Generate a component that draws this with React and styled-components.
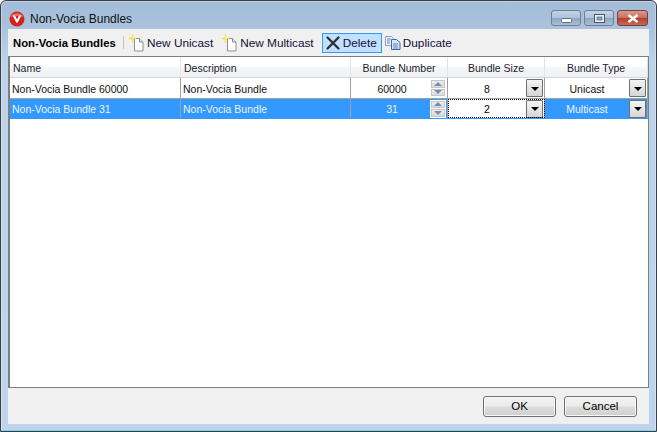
import styled, { createGlobalStyle } from "styled-components";

const Global = createGlobalStyle`
  html, body { margin: 0; padding: 0; background: #fff; }
  body { font-family: "Liberation Sans", Arial, sans-serif; font-size: 10.5px; color: #000; }
`;

const Window = styled.div`
  width: 657px;
  height: 432px;
  box-sizing: border-box;
  display: flex;
  flex-direction: column;
  border: 1px solid #3a3f46;
  border-radius: 6px 6px 0 0;
  background: linear-gradient(180deg, #a3bcd8 0, #abc3dd 30px, #bcd3ea 60px, #bdd4ec 100%);
  box-shadow: inset 0 0 0 1px rgba(255, 255, 255, 0.35);
`;

const TitleBar = styled.div`
  height: 28px;
  flex: none;
  display: flex;
  align-items: flex-start;
  justify-content: space-between;
  padding: 0 8px 0 8px;
`;

const TitleLeft = styled.div`
  display: flex;
  align-items: center;
  gap: 5px;
  height: 36px;
  font-size: 12px;
  color: #111;
`;

const Controls = styled.div`
  display: flex;
  gap: 3px;
  margin-top: 9px;
`;

const Control = styled.div`
  width: ${(p) => (p.$close ? 31 : 30)}px;
  height: 16px;
  box-sizing: border-box;
  display: flex;
  align-items: ${(p) => (p.$low ? "flex-end" : "center")};
  justify-content: center;
  padding-bottom: ${(p) => (p.$low ? 2 : 0)}px;
  border: 1px solid ${(p) => (p.$close ? "#7c3f38" : "#6d7f95")};
  border-radius: 3px;
  background: ${(p) =>
    p.$close
      ? "linear-gradient(180deg, #d79a8e 0, #c9705f 48%, #b2402c 52%, #c56a58 100%)"
      : "linear-gradient(180deg, #c3d3e5 0, #aec2d9 48%, #8ea6c1 52%, #a9bfd7 100%)"};
`;

const Content = styled.div`
  flex: 1;
  margin: 0 7px;
  display: flex;
  flex-direction: column;
  background: #f0f0f0;
  min-height: 0;
`;

const Toolbar = styled.div`
  height: 27px;
  flex: none;
  display: flex;
  align-items: center;
  padding-left: 5px;
  font-size: 11.8px;
`;

const ToolTitle = styled.span`
  font-weight: 700;
  font-size: 11.3px;
  width: 103px;
  white-space: nowrap;
`;

const Separator = styled.div`
  width: 1px;
  height: 13px;
  background: #c4c4c4;
  margin: 0 4px 0 7px;
`;

const ToolButton = styled.div`
  height: 20px;
  box-sizing: border-box;
  display: flex;
  align-items: center;
  gap: 2px;
  padding: 0 ${(p) => (p.$active ? 4 : 2)}px 0 ${(p) => (p.$active ? 2 : 0)}px;
  margin-right: ${(p) => (p.$active ? 2 : 5)}px;
  border: 1px solid ${(p) => (p.$active ? "#3399ff" : "transparent")};
  background: ${(p) => (p.$active ? "#c2e0ff" : "transparent")};
  color: #10103a;
`;

const Grid = styled.div`
  flex: 1;
  min-height: 0;
  background: #fff;
  border: 1px solid #7f7f7f;
  border-left-width: 2px;
  box-sizing: border-box;
`;

const Columns = "171px 170px 97px 97px 1fr";

const HeadRow = styled.div`
  height: 21px;
  display: grid;
  grid-template-columns: ${Columns};
  background: linear-gradient(180deg, #fff 0, #fff 45%, #f4f5f6 55%, #eff1f2 100%);
  border-bottom: 1px solid #d5d5d5;
  box-sizing: border-box;
`;

const HeadCell = styled.div`
  display: flex;
  align-items: center;
  justify-content: ${(p) => (p.$center ? "center" : "flex-start")};
  padding-left: ${(p) => (p.$center ? 0 : 3)}px;
  padding-top: 2px;
  border-right: 1px solid #e3e4e6;
  color: #1b1b2e;
`;

const Row = styled.div`
  height: ${(p) => (p.$selected ? 19 : 20)}px;
  display: grid;
  grid-template-columns: ${Columns};
  background: ${(p) => (p.$selected ? "#3399ff" : "#fff")};
  color: ${(p) => (p.$selected ? "#eaf4ff" : "#111")};
  border-bottom: 1px solid ${(p) => (p.$selected ? "#3399ff" : "#a0a0a0")};
`;

const Cell = styled.div`
  display: flex;
  align-items: center;
  min-width: 0;
  padding-left: ${(p) => (p.$number ? 3 : p.$center ? 0 : 2)}px;
  border-right: 1px solid #a0a0a0;
`;

const CellText = styled.span`
  flex: 1;
  padding-top: 1px;
  text-align: ${(p) => (p.$center ? "center" : "left")};
  white-space: nowrap;
`;

const EditCell = styled(Cell)`
  background: #fff;
  color: #000;
  outline: 1px dotted #000;
  outline-offset: -1px;
  padding-left: 0;
`;

const Spinner = styled.div`
  width: 14px;
  height: 16px;
  margin-right: 1px;
  flex: none;
  display: flex;
  flex-direction: column;
  gap: 1px;
  background: ${(p) => (p.$selected ? "#fff" : "transparent")};
  padding: 1px;
`;

const SpinPart = styled.div`
  flex: 1;
  display: flex;
  align-items: center;
  justify-content: center;
  background: linear-gradient(180deg, #eeeef0, #d9dade);
  border: 1px solid #c6c7cb;
`;

const ArrowUp = styled.div`
  border-left: 4px solid transparent;
  border-right: 4px solid transparent;
  border-bottom: 4px solid #7a8cb4;
`;

const ArrowDown = styled(ArrowUp)`
  border-bottom: 0;
  border-top: 4px solid #7a8cb4;
`;

const DropButton = styled.div`
  width: 17px;
  height: 18px;
  margin-right: 1px;
  flex: none;
  box-sizing: border-box;
  display: flex;
  align-items: center;
  justify-content: center;
  border: 1px solid #707070;
  border-radius: 1px;
  background: linear-gradient(180deg, #f4f4f4, #d6d6d6);
`;

const DropArrow = styled.div`
  border-left: 4px solid transparent;
  border-right: 4px solid transparent;
  border-top: 4px solid #000;
  margin-top: 1px;
`;

const Footer = styled.div`
  height: 36px;
  flex: none;
  display: flex;
  justify-content: flex-end;
  align-items: center;
  gap: 8px;
  padding-right: 12px;
  box-sizing: border-box;
`;

const Button = styled.div`
  width: 73px;
  height: 21px;
  box-sizing: border-box;
  display: flex;
  align-items: center;
  justify-content: center;
  border: 1px solid #707070;
  border-radius: 3px;
  background: linear-gradient(180deg, #f2f2f2 0, #ebebeb 48%, #dddddd 52%, #cfcfcf 100%);
  box-shadow: inset 0 0 0 1px #f8f8f8;
  font-size: 11.5px;
`;

const BottomEdge = styled.div`
  height: 7px;
  flex: none;
  border-bottom: 1px solid #7fd0e0;
  box-sizing: border-box;
`;

const AppIcon = () => (
  <svg width="16" height="16" viewBox="0 0 16 16">
    <circle cx="8" cy="8" r="7.5" fill="#d3221e" />
    <path d="M1.5 6a7 6 0 0 1 13 0c-3-1.5-10-1.5-13 0z" fill="#ee6a60" />
    <path d="M3.6 4.5 6 4.5 8 8.4 10 4.5 12.4 4.5 8.6 11.8 7.4 11.8z" fill="#fff" />
  </svg>
);

const NewIcon = () => (
  <svg width="16" height="18" viewBox="0 0 16 18">
    <path d="M5.5 4.5h5l3.5 3.5v9h-8.500z" fill="#fff" stroke="#8b8f94" />
    <path d="M10.500 4.500v3.500h3.500" fill="#dfe6ee" stroke="#8b8f94" />
    <path d="M3.500 0.500v2M3.500 6.500v2M0 4.500h2M5 4.500h2" stroke="#f2d84a" strokeWidth="1.400" />
    <rect x="2" y="3" width="3" height="3" fill="#f7e56c" />
  </svg>
);

const DeleteIcon = () => (
  <svg width="16" height="16" viewBox="0 0 16 16">
    <path d="M2.500 2.500 13.500 13.500M13.500 2.500 2.500 13.500" stroke="#2c3036" strokeWidth="2.300" strokeLinecap="round" />
  </svg>
);

const DuplicateIcon = () => (
  <svg width="16" height="14" viewBox="0 0 16 14">
    <path d="M0.500 0.500h6l2 2v7h-8z" fill="#f4f7fb" stroke="#8a9db8" />
    <path d="M6.500 3.500h5l3.500 3v7h-8.500z" fill="#d8e6f7" stroke="#3d67a8" />
    <path d="M2 3h4M2 5h3M2 7h3M8 8h5M8 10h5M8 12h5" stroke="#5f83bb" />
  </svg>
);

const Minimize = () => (
  <svg width="11" height="5" viewBox="0 0 11 5"><rect x="0.500" y="0.500" width="10" height="4" rx="1" fill="#fff" stroke="#5c6c80" /></svg>
);
const Maximize = () => (
  <svg width="11" height="9" viewBox="0 0 11 9"><rect x="0.500" y="0.500" width="10" height="8" fill="#e9eff6" stroke="#46566a" /><rect x="3" y="3" width="5" height="3" fill="#8ea6c1" stroke="#46566a" strokeWidth="0.600" /></svg>
);
const Close = () => (
  <svg width="12" height="9" viewBox="0 0 12 9"><path d="M1.500 1 10.500 8M10.500 1 1.500 8" stroke="#fff" strokeWidth="2.400" /></svg>
);

const Spin = ({ selected }) => (
  <Spinner $selected={selected}>
    <SpinPart><ArrowUp /></SpinPart>
    <SpinPart><ArrowDown /></SpinPart>
  </Spinner>
);

const Drop = () => (
  <DropButton><DropArrow /></DropButton>
);

const App = () => {
  return (
    <Window>
      <Global />
      <TitleBar>
        <TitleLeft>
          <AppIcon />
          Non-Vocia Bundles
        </TitleLeft>
        <Controls>
          <Control $low><Minimize /></Control>
          <Control><Maximize /></Control>
          <Control $close><Close /></Control>
        </Controls>
      </TitleBar>
      <Content>
        <Toolbar>
          <ToolTitle>Non-Vocia Bundles</ToolTitle>
          <Separator />
          <ToolButton><NewIcon />New Unicast</ToolButton>
          <ToolButton><NewIcon />New Multicast</ToolButton>
          <ToolButton $active><DeleteIcon />Delete</ToolButton>
          <ToolButton><DuplicateIcon />Duplicate</ToolButton>
        </Toolbar>
        <Grid>
          <HeadRow>
            <HeadCell>Name</HeadCell>
            <HeadCell>Description</HeadCell>
            <HeadCell $center>Bundle Number</HeadCell>
            <HeadCell $center>Bundle Size</HeadCell>
            <HeadCell $center>Bundle Type</HeadCell>
          </HeadRow>
          <Row>
            <Cell><CellText>Non-Vocia Bundle 60000</CellText></Cell>
            <Cell><CellText>Non-Vocia Bundle</CellText></Cell>
            <Cell $number><CellText $center>60000</CellText><Spin /></Cell>
            <Cell $center><CellText $center>8</CellText><Drop /></Cell>
            <Cell $center><CellText $center>Unicast</CellText><Drop /></Cell>
          </Row>
          <Row $selected>
            <Cell><CellText>Non-Vocia Bundle 31</CellText></Cell>
            <Cell><CellText>Non-Vocia Bundle</CellText></Cell>
            <Cell $number><CellText $center>31</CellText><Spin selected /></Cell>
            <EditCell $center><CellText $center>2</CellText><Drop /></EditCell>
            <Cell $center><CellText $center>Multicast</CellText><Drop /></Cell>
          </Row>
        </Grid>
        <Footer>
          <Button>OK</Button>
          <Button>Cancel</Button>
        </Footer>
      </Content>
      <BottomEdge />
    </Window>
  );
};

export default App;
